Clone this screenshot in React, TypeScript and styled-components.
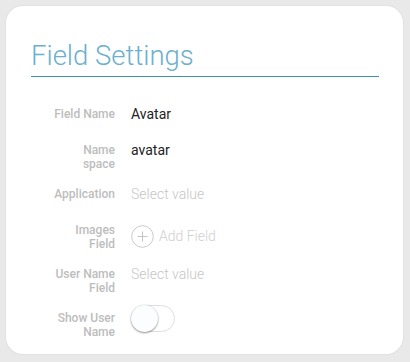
import React from 'react'
import styled, { createGlobalStyle } from 'styled-components'

const GlobalStyle = createGlobalStyle`
  html, body {
    margin: 0;
    padding: 0;
    background: #e9e9ea;
    font-family: Roboto, 'Noto Sans', Arial, sans-serif;
  }
`

const Page = styled.div`
  padding: 6px 7px 8px 6px;
`

const Card = styled.div`
  box-sizing: border-box;
  width: 397px;
  height: 348px;
  background: #ffffff;
  border-radius: 17px;
  box-shadow: 0 0 0 1px #e2e2e4;
  padding: 34px 24px 0 25px;
`

const Title = styled.h2`
  margin: 0;
  font-size: 27.5px;
  font-weight: 300;
  line-height: 32px;
  color: #6cb0cf;
  padding-bottom: 4px;
  border-bottom: 1px solid #3f93ad;
`

const Rows = styled.div`
  display: flex;
  flex-direction: column;
  gap: 14px;
  margin-top: 28px;
`

const Row = styled.div`
  display: grid;
  grid-template-columns: 84px 1fr;
  column-gap: 16px;
  min-height: 22px;
`

const Label = styled.div`
  padding-top: 2px;
  text-align: right;
  font-size: 12px;
  font-weight: 500;
  line-height: 14px;
  color: #bdbdbd;
`

const Value = styled.div<{ $placeholder?: boolean }>`
  font-size: 14px;
  line-height: 18px;
  font-weight: ${p => (p.$placeholder ? 300 : 400)};
  color: ${p => (p.$placeholder ? '#c6c6c6' : '#222222')};
`

const AddButton = styled.div`
  display: flex;
  align-items: center;
  gap: 5px;
  align-self: center;
  font-size: 14px;
  font-weight: 300;
  color: #cfcfcf;
  svg {
    display: block;
  }
`

const Toggle = styled.div`
  position: relative;
  box-sizing: border-box;
  width: 44px;
  height: 27px;
  margin-top: -4px;
  border: 1px solid #dedede;
  border-radius: 14px;
  background: #fff;
  &::after {
    content: '';
    position: absolute;
    left: -1px;
    top: -1px;
    width: 27px;
    height: 27px;
    border-radius: 50%;
    background: #fcfdfe;
    box-shadow: 0 1px 2px rgba(0, 0, 0, 0.4), 0 0 0 0.5px rgba(0, 0, 0, 0.08);
  }
`

function PlusCircle() {
  return (
    <svg width='23' height='23' viewBox='0 0 23 23' fill='none'>
      <circle cx='11.5' cy='11.5' r='10.8' stroke='#c9c9c9' strokeWidth='1' />
      <path d='M11.5 6.5v10M6.5 11.5h10' stroke='#c4c4c4' strokeWidth='1' />
    </svg>
  )
}

export default function App() {
  return (
    <>
      <GlobalStyle />
      <Page>
        <Card>
          <Title>Field Settings</Title>
          <Rows>
            <Row>
              <Label>Field Name</Label>
              <Value>Avatar</Value>
            </Row>
            <Row>
              <Label>
                Name
                <br />
                space
              </Label>
              <Value>avatar</Value>
            </Row>
            <Row>
              <Label>Application</Label>
              <Value $placeholder>Select value</Value>
            </Row>
            <Row>
              <Label>
                Images
                <br />
                Field
              </Label>
              <AddButton>
                <PlusCircle />
                Add Field
              </AddButton>
            </Row>
            <Row>
              <Label>
                User Name
                <br />
                Field
              </Label>
              <Value $placeholder>Select value</Value>
            </Row>
            <Row>
              <Label>
                Show User
                <br />
                Name
              </Label>
              <Toggle />
            </Row>
          </Rows>
        </Card>
      </Page>
    </>
  )
}
